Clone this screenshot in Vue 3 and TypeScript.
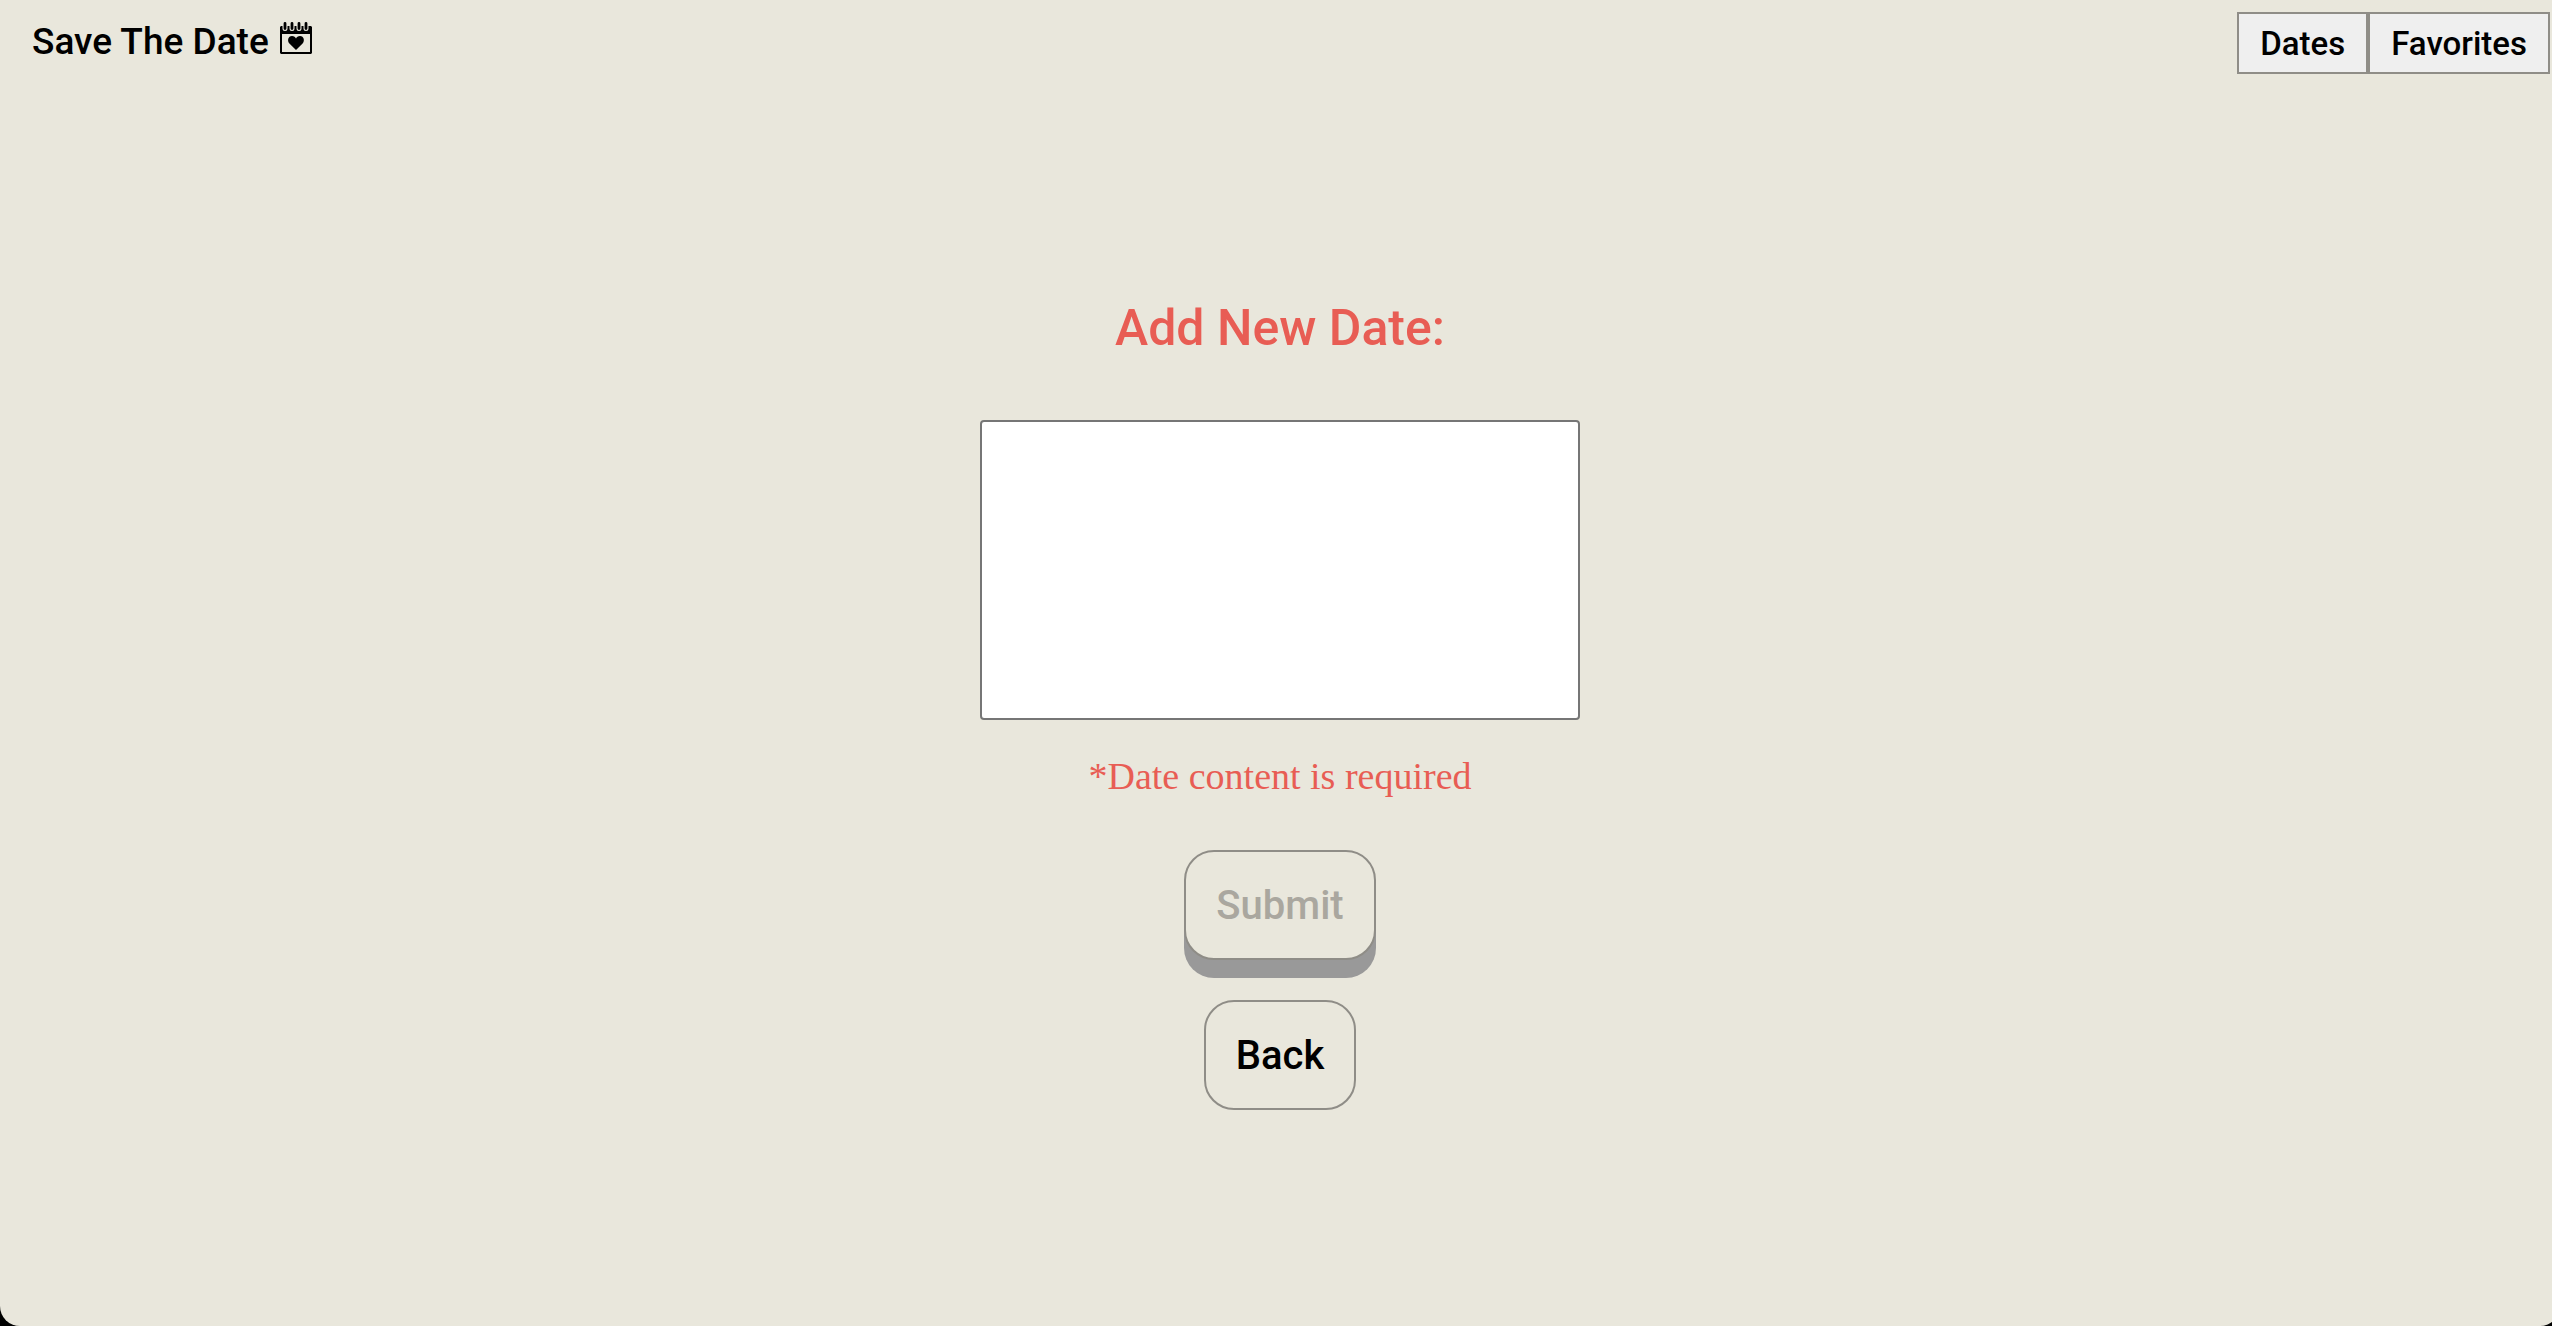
<script setup lang="ts">
import { computed, ref } from 'vue'

const content = ref('')
const isEmpty = computed(() => content.value.trim() === '')
</script>

<template>
  <div class="page">
    <header class="header">
      <h1 class="brand">
        <span>Save The Date</span>
        <svg class="brand-icon" viewBox="0 0 32 32" aria-hidden="true">
          <path d="M1 4h30l1 1v26l-1 1H1l-1-1V5z M2 12v18h28V12z" fill="#000" fill-rule="evenodd" />
          <g fill="none" stroke-linecap="round">
            <path d="M5 3v3.5M12 3v3.5M19 3v3.5M26 3v3.5" stroke="#e9e7dc" stroke-width="5" />
            <path d="M5 1.5v5M12 1.5v5M19 1.5v5M26 1.5v5" stroke="#000" stroke-width="2.8" />
          </g>
          <path d="M16 28L9.4 21.6C7 19 8 14 12 14C14 14 15.4 15 16 16.6C16.6 15 18 14 20 14C24 14 25 19 22.6 21.6Z" fill="#000" />
        </svg>
      </h1>
      <nav class="nav">
        <button type="button" class="nav-button">Dates</button>
        <button type="button" class="nav-button">Favorites</button>
      </nav>
    </header>

    <main class="main">
      <form class="form" @submit.prevent>
        <label class="title" for="date-content">Add New Date:</label>
        <textarea id="date-content" v-model="content" class="field" aria-describedby="date-error"></textarea>
        <p id="date-error" class="error">{{ isEmpty ? '*Date content is required' : '' }}</p>
        <button type="submit" class="action submit" :disabled="isEmpty">Submit</button>
        <button type="button" class="action">Back</button>
      </form>
    </main>
  </div>
</template>

<style>
html,
body {
  background: #000;
  overflow: hidden;
}
</style>

<style scoped>
.page {
  width: calc(100% + 8px);
  min-height: 100vh;
  box-sizing: border-box;
  border-radius: 0 0 20px 20px;
  background: #e9e7dc;
  font-family: Roboto, "Liberation Sans", sans-serif;
  font-weight: 500;
  color: #000;
}

.header {
  display: flex;
  justify-content: space-between;
  align-items: flex-start;
  padding: 12px 10px 0 32px;
}

.brand {
  display: flex;
  align-items: flex-start;
  gap: 11px;
  margin: 0;
  font-size: 37px;
  font-weight: 500;
  line-height: 60px;
}

.brand-icon {
  width: 32px;
  height: 32px;
  margin-top: 10px;
}

.nav {
  display: flex;
}

.nav-button {
  height: 62px;
  padding: 0 21px;
  border: 2px solid #8f8d87;
  border-radius: 0;
  background: #efefef;
  color: #000;
  font: inherit;
  font-size: 33px;
}

.form {
  display: flex;
  flex-direction: column;
  align-items: center;
  padding-top: 224px;
}

.title {
  margin-bottom: 62px;
  color: #e85d54;
  font-size: 50px;
  line-height: 60px;
}

.field {
  width: 600px;
  height: 300px;
  box-sizing: border-box;
  padding: 8px;
  border: 2px solid #767676;
  border-radius: 4px;
  background: #fff;
  font: inherit;
  font-size: 32px;
  resize: none;
}

.error {
  min-height: 44px;
  margin: 34px 0 52px;
  color: #e85d54;
  font-family: "Liberation Serif", serif;
  font-size: 38px;
  font-weight: 400;
  line-height: 44px;
}

.action {
  height: 110px;
  padding: 0 30px;
  border: 2px solid #8f8d87;
  border-radius: 30px;
  background: #e9e7dc;
  color: #000;
  font: inherit;
  font-size: 40px;
}

.submit {
  margin-bottom: 40px;
  box-shadow: 0 18px 0 #999;
}

.submit:disabled {
  color: #aaa79f;
}
</style>
